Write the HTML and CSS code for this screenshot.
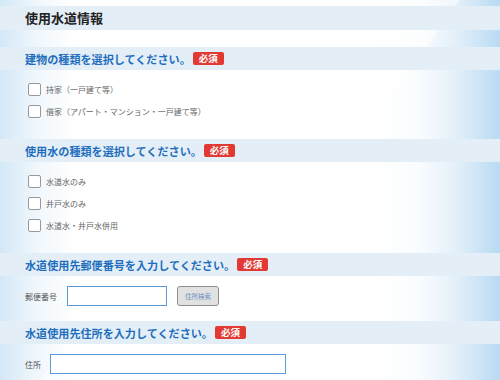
FILE: index.html
```html
<!DOCTYPE html>
<html lang="ja">
<head>
<meta charset="utf-8">
<title>使用水道情報</title>
<link rel="stylesheet" href="styles.css">
</head>
<body>
<div class="page">
  <h1 class="title">使用水道情報</h1>

  <section class="section">
    <h2 class="head">建物の種類を選択してください。<span class="badge">必須</span></h2>
    <div class="checks">
      <label class="check"><span class="box"></span>持家（一戸建て等）</label>
      <label class="check"><span class="box"></span>借家（アパート・マンション・一戸建て等）</label>
    </div>
  </section>

  <section class="section">
    <h2 class="head">使用水の種類を選択してください。<span class="badge">必須</span></h2>
    <div class="checks">
      <label class="check"><span class="box"></span>水道水のみ</label>
      <label class="check"><span class="box"></span>井戸水のみ</label>
      <label class="check"><span class="box"></span>水道水・井戸水併用</label>
    </div>
  </section>

  <section class="section">
    <h2 class="head">水道使用先郵便番号を入力してください。<span class="badge">必須</span></h2>
    <div class="field">
      <span class="label">郵便番号</span>
      <span class="input zip"></span>
      <span class="btn">住所検索</span>
    </div>
  </section>

  <section class="section">
    <h2 class="head">水道使用先住所を入力してください。<span class="badge">必須</span></h2>
    <div class="field">
      <span class="label">住所</span>
      <span class="input addr"></span>
    </div>
  </section>
</div>
</body>
</html>
```

FILE: styles.css
```css
html, body {
  margin: 0;
  padding: 0;
}
body {
  width: 500px;
  height: 380px;
  overflow: hidden;
  font-family: "Noto Sans CJK JP", "Noto Sans", sans-serif;
  color: #333;
  background-color: #fff;
  background-image:
    linear-gradient(125deg, rgba(255,255,255,0) 0 40%, rgba(255,255,255,0.5) 40% 60%, rgba(255,255,255,0) 60%),
    linear-gradient(to right, rgba(196,224,244,0.75) 0, rgba(220,236,248,0.45) 35px, rgba(255,255,255,0) 75px),
    linear-gradient(to left, rgba(172,212,240,0.85) 0, rgba(205,228,246,0.55) 45px, rgba(236,244,251,0.3) 80px, rgba(255,255,255,0) 125px);
}
.page {
  padding-top: 6px;
  display: flex;
  flex-direction: column;
}
.title {
  margin: 0;
  height: 24px;
  line-height: 24px;
  padding-left: 25px;
  background: #e4eef7;
  font-size: 13px;
  font-weight: 700;
  color: #222;
}
.section {
  display: flex;
  flex-direction: column;
}
.title + .section { margin-top: 17px; }
.head {
  margin: 0;
  height: 23px;
  padding-left: 25px;
  background: #e4eef7;
  display: flex;
  align-items: center;
  font-size: 11.1px;
  font-weight: 700;
  color: #1f6ebd;
}
.badge {
  margin-left: 2px;
  background: #e23a33;
  color: #fff;
  font-size: 9.5px;
  font-weight: 700;
  height: 13px;
  line-height: 13px;
  padding: 0 6px;
  border-radius: 2px;
}
.checks {
  display: flex;
  flex-direction: column;
  gap: 9px;
  padding: 13px 0 21px 28px;
}
.check {
  display: flex;
  align-items: center;
  gap: 5px;
  height: 13px;
  font-size: 8px;
  color: #666;
}
.box {
  width: 11px;
  height: 11px;
  border: 1px solid #999;
  border-radius: 2px;
  background: #fff;
}
.field {
  display: flex;
  align-items: center;
  padding: 10px 0 15px 25px;
  font-size: 8px;
  color: #555;
}
.label { margin-right: 10px; }
.input {
  height: 18px;
  border: 1px solid #5b9ad6;
  background: #fff;
}
.zip { width: 98px; }
.addr { width: 234px; margin-left: -1px; }
.btn {
  margin-left: 10px;
  width: 40px;
  height: 18px;
  border: 1px solid #8d8d8d;
  border-radius: 3px;
  background: #e1e1e1;
  color: #6f8fbf;
  font-size: 6.5px;
  display: flex;
  align-items: center;
  justify-content: center;
}
```
